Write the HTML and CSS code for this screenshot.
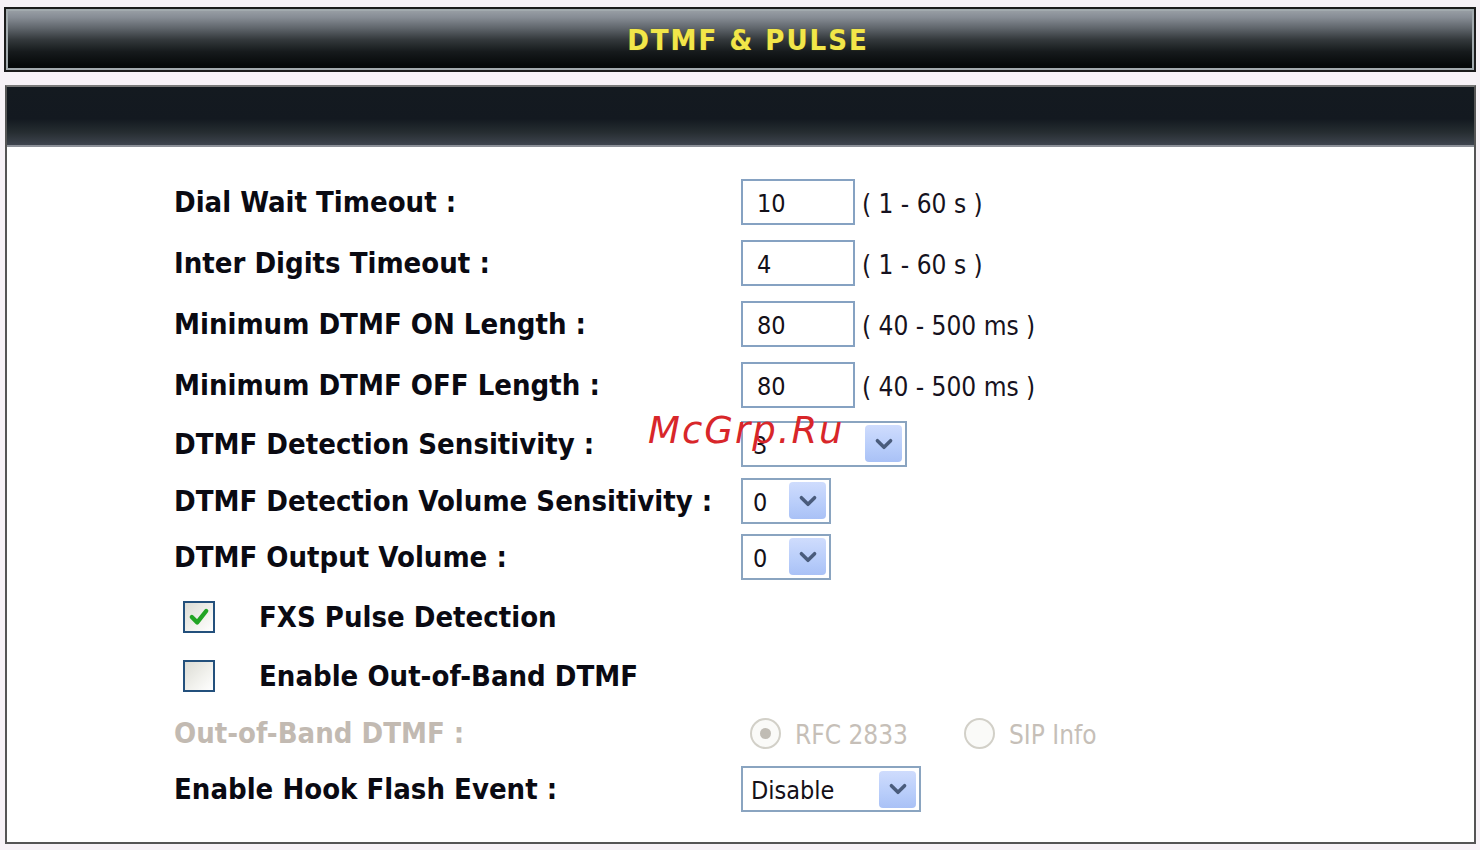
FILE: index.html
```html
<!DOCTYPE html>
<html>
<head>
<meta charset="utf-8">
<link rel="stylesheet" href="styles.css">
</head>
<body>
<div class="page">
  <div class="titlebar"><span class="title">DTMF &amp; PULSE</span></div>
  <div class="panel">
    <div class="band"></div>
    <div class="form">
      <div class="row r1">
        <div class="label">Dial Wait Timeout :</div>
        <div class="field"><span class="textbox">10</span><span class="hint">( 1 - 60 s )</span></div>
      </div>
      <div class="row r1">
        <div class="label">Inter Digits Timeout :</div>
        <div class="field"><span class="textbox">4</span><span class="hint">( 1 - 60 s )</span></div>
      </div>
      <div class="row r1">
        <div class="label">Minimum DTMF ON Length :</div>
        <div class="field"><span class="textbox">80</span><span class="hint">( 40 - 500 ms )</span></div>
      </div>
      <div class="row r1">
        <div class="label">Minimum DTMF OFF Length :</div>
        <div class="field"><span class="textbox">80</span><span class="hint">( 40 - 500 ms )</span></div>
      </div>
      <div class="row r5">
        <div class="label">DTMF Detection Sensitivity :</div>
        <div class="field"><span class="select wide"><span class="val">3</span><span class="arrow"><svg viewBox="0 0 20 20" width="22" height="22"><path d="M4 7 L10 13 L16 7" fill="none" stroke="#4a5c7c" stroke-width="3.2" stroke-linecap="round" stroke-linejoin="round"/></svg></span></span></div>
      </div>
      <div class="row r6">
        <div class="label">DTMF Detection Volume Sensitivity :</div>
        <div class="field"><span class="select narrow"><span class="val">0</span><span class="arrow"><svg viewBox="0 0 20 20" width="22" height="22"><path d="M4 7 L10 13 L16 7" fill="none" stroke="#4a5c7c" stroke-width="3.2" stroke-linecap="round" stroke-linejoin="round"/></svg></span></span></div>
      </div>
      <div class="row r7">
        <div class="label">DTMF Output Volume :</div>
        <div class="field"><span class="select narrow"><span class="val">0</span><span class="arrow"><svg viewBox="0 0 20 20" width="22" height="22"><path d="M4 7 L10 13 L16 7" fill="none" stroke="#4a5c7c" stroke-width="3.2" stroke-linecap="round" stroke-linejoin="round"/></svg></span></span></div>
      </div>
      <div class="row r8 check-row">
        <span class="checkbox checked"><svg viewBox="0 0 20 20" width="24" height="24"><path d="M4 10 L8.5 14.5 L16 5" fill="none" stroke="#22a524" stroke-width="3.6" stroke-linecap="round" stroke-linejoin="round"/></svg></span>
        <span class="check-label">FXS Pulse Detection</span>
      </div>
      <div class="row r9 check-row">
        <span class="checkbox"></span>
        <span class="check-label">Enable Out-of-Band DTMF</span>
      </div>
      <div class="row r10 disabled">
        <div class="label">Out-of-Band DTMF :</div>
        <div class="field radios">
          <span class="radio on"></span><span class="radio-label">RFC 2833</span>
          <span class="radio"></span><span class="radio-label">SIP Info</span>
        </div>
      </div>
      <div class="row r11">
        <div class="label">Enable Hook Flash Event :</div>
        <div class="field"><span class="select hook"><span class="val">Disable</span><span class="arrow"><svg viewBox="0 0 20 20" width="22" height="22"><path d="M4 7 L10 13 L16 7" fill="none" stroke="#4a5c7c" stroke-width="3.2" stroke-linecap="round" stroke-linejoin="round"/></svg></span></span></div>
      </div>
      <div class="watermark">McGrp.Ru</div>
    </div>
  </div>
</div>
</body>
</html>
```

FILE: styles.css
```css
html, body {
  margin: 0;
  padding: 0;
  background: #f7f2f7;
}
.page {
  padding: 7px 4px 5px 4px;
  font-family: "DejaVu Sans Condensed", "DejaVu Sans", sans-serif;
}
.titlebar {
  height: 61px;
  border: 2px solid #1c1c1c;
  box-shadow: inset 0 0 0 2px #a2aaae;
  background: linear-gradient(to bottom, #9ca2a8 0%, #868c94 14%, #5e646a 32%, #34393c 50%, #161a1c 70%, #06090a 92%, #06090a 100%);
  display: flex;
  align-items: center;
  justify-content: center;
}
.title {
  color: #f2e64a;
  font-weight: bold;
  font-size: 29px;
  letter-spacing: 2px;
  padding-left: 16px;
  text-shadow: 0 0 1px #6b6a10;
}
.panel {
  margin-top: 13px;
  margin-left: 1px;
  border: 2px solid #555;
  border-top-color: #7a7a7a;
  background: #fff;
}
.band {
  height: 58px;
  background: linear-gradient(to bottom, #141a20 0%, #131920 55%, #262d31 78%, #3e444e 100%);
  border-bottom: 2px solid #8c9098;
}
.form {
  position: relative;
  padding: 24px 0 28px 167px;
}
.row {
  display: flex;
  align-items: center;
}
.r1 { height: 61px; }
.r5 { height: 57px; }
.r6 { height: 57px; }
.r7 { height: 55px; }
.r8 { height: 66px; }
.r9 { height: 52px; }
.r10 { height: 62px; }
.r11 { height: 50px; }
.label {
  width: 567px;
  flex: none;
  font-weight: bold;
  font-size: 29px;
  color: #0a0a12;
  white-space: nowrap;
}
.field {
  display: flex;
  align-items: center;
}
.textbox {
  box-sizing: border-box;
  width: 114px;
  height: 46px;
  border: 2px solid #86a2c2;
  background: #fff;
  font-size: 25px;
  color: #141018;
  padding: 6px 0 0 14px;
  line-height: 34px;
}
.hint {
  font-size: 26px;
  color: #161220;
  margin-left: 7px;
  padding-top: 4px;
}
.select {
  box-sizing: border-box;
  height: 46px;
  border: 2px solid #8aa4c0;
  background: #fff;
  display: flex;
  align-items: center;
  justify-content: space-between;
  padding: 0 3px 0 10px;
}
.select.wide { width: 166px; }
.select.narrow { width: 90px; }
.select.hook { width: 180px; padding-left: 8px; }
.select .val {
  font-size: 25px;
  color: #141018;
  padding-top: 3px;
}
.arrow {
  width: 37px;
  height: 37px;
  border-radius: 4px;
  background: linear-gradient(to bottom, #cfdcfd 0%, #b8cdfa 60%, #a9c1f6 100%);
  display: flex;
  align-items: center;
  justify-content: center;
}
.check-row {
  padding-left: 9px;
}
.checkbox {
  box-sizing: border-box;
  width: 32px;
  height: 32px;
  border: 2px solid #23507c;
  background: linear-gradient(135deg, #dcdcd5 0%, #f2f2ee 60%, #ffffff 100%);
  display: flex;
  align-items: center;
  justify-content: center;
  flex: none;
}
.check-label {
  font-weight: bold;
  font-size: 29px;
  color: #0a0a12;
  margin-left: 44px;
}
.disabled .label {
  color: #c2bab2;
}
.radios {
  padding-left: 9px;
}
.radio {
  box-sizing: border-box;
  width: 31px;
  height: 31px;
  border-radius: 50%;
  border: 2px solid #d2d0c8;
  background: #fafaf8;
  display: flex;
  align-items: center;
  justify-content: center;
}
.radio.on::after {
  content: "";
  width: 11px;
  height: 11px;
  border-radius: 50%;
  background: #c0bcb4;
}
.radio-label {
  font-size: 26px;
  color: #c6bfb8;
  margin-left: 14px;
  margin-right: 56px;
  padding-top: 4px;
}
.radio-label + .radio {
  margin-left: 0;
}
.watermark {
  position: absolute;
  left: 641px;
  top: 262px;
  font-family: "DejaVu Sans", sans-serif;
  font-style: italic;
  font-size: 37px;
  letter-spacing: 2px;
  color: #d8262a;
}
```
